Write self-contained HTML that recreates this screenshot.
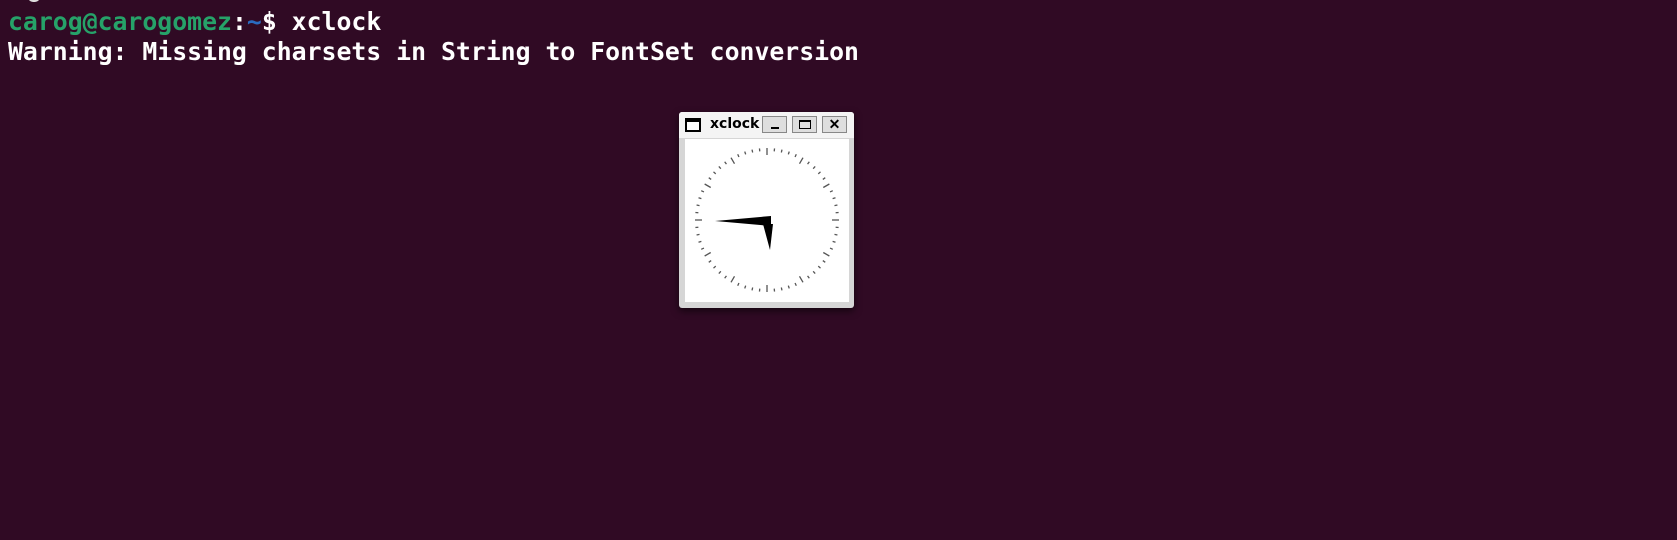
<!DOCTYPE html>
<html><head><style>
body{margin:0;width:1677px;height:540px;background:#300a24;overflow:hidden;position:relative;font-family:"DejaVu Sans Mono","Liberation Mono",monospace;}
.t{position:absolute;left:8px;font-size:24.8px;color:#fff;white-space:pre;line-height:31px;font-weight:bold;}
.win{position:absolute;left:679px;top:112px;width:175px;height:196px;background:#d6d6d6;border-radius:3px;box-shadow:0 3px 8px rgba(0,0,0,.6);}
.tb{position:absolute;left:0;top:0;width:175px;height:26px;background:#f4f4f4;border-radius:3px 3px 0 0;}
.btn{position:absolute;top:4px;width:25px;height:17px;background:#dedede;border:1px solid #888;box-sizing:border-box;}
</style></head><body>
<div style="position:absolute;left:28px;top:-3px;width:12px;height:5px;border-radius:0 0 6px 6px;background:#ddd"></div>
<div class="t" style="top:6px"><span style="color:#26a269">carog@carogomez</span>:<span style="color:#2a6bc0">~</span>$ xclock</div>
<div class="t" style="top:36px">Warning: Missing charsets in String to FontSet conversion</div>
<div class="win">
 <div class="tb">
  <div style="position:absolute;left:6px;top:6px;width:16px;height:14px;border:2px solid #000;border-top-width:4px;box-sizing:border-box;background:#fff"></div>
  <div style="position:absolute;left:31px;top:4px;font:bold 14px 'DejaVu Sans','Liberation Sans',sans-serif;">xclock</div>
  <div class="btn" style="left:83px"><div style="position:absolute;left:8px;top:10px;width:8px;height:2px;background:#000"></div></div>
  <div class="btn" style="left:113px"><div style="position:absolute;left:6px;top:3px;width:12px;height:9px;border:1px solid #000;border-top-width:2px;box-sizing:border-box"></div></div>
  <div class="btn" style="left:143px;font:bold 14px 'Liberation Sans',sans-serif;text-align:center;line-height:15px">✕</div>
 </div>
 <svg style="position:absolute;left:6px;top:27px" width="164" height="163" viewBox="685 139 164 163">
  <rect x="685" y="139" width="164" height="163" fill="#fff"/>
  <g id="ticks" stroke="#555" stroke-width="1.3"></g>
  <polygon points="715,221 771,216 771,226" fill="#000"/>
  <polygon points="763,224 773,224 770,250" fill="#000"/>
 </svg>
</div>
<script>
var g=document.getElementById('ticks'),s='';
for(var i=0;i<60;i++){var a=i*Math.PI/30,r1=72,r2=i%5?69:65,cx=767,cy=220;
s+='<line x1="'+(cx+r1*Math.sin(a))+'" y1="'+(cy-r1*Math.cos(a))+'" x2="'+(cx+r2*Math.sin(a))+'" y2="'+(cy-r2*Math.cos(a))+'"/>';}
g.innerHTML=s;
</script>
</body></html>
